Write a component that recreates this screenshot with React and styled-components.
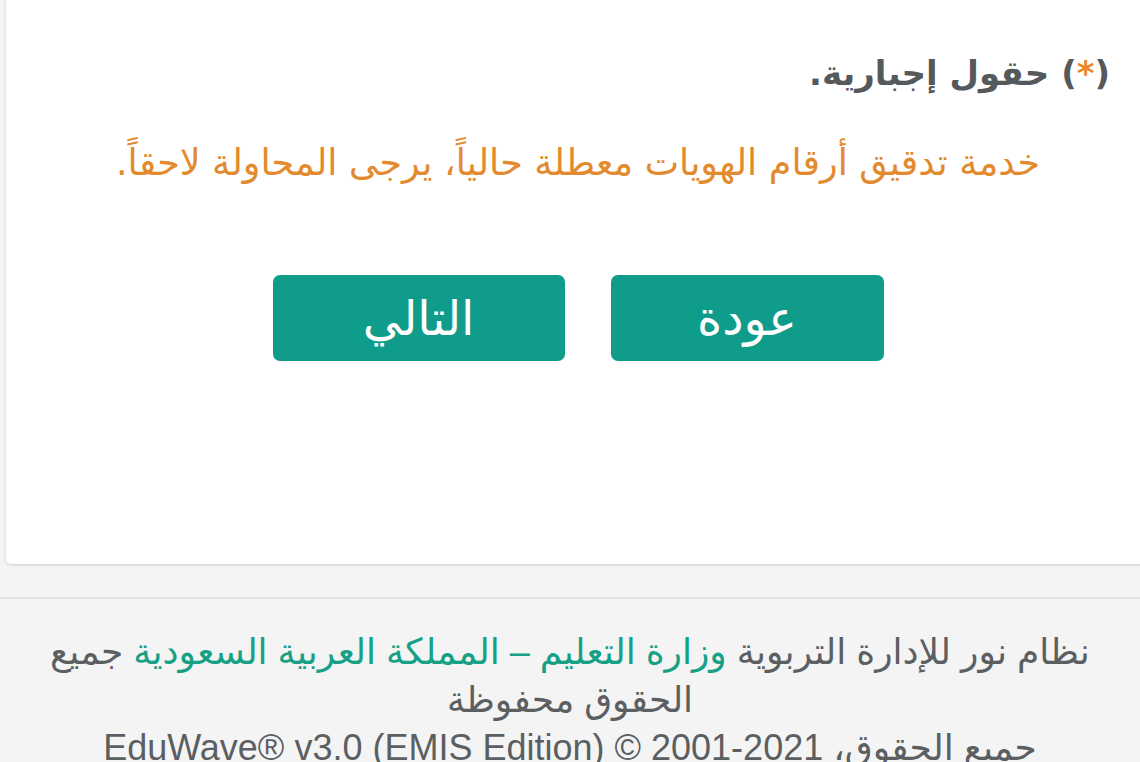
import React from "react";
import styled, { createGlobalStyle } from "styled-components";

const GlobalStyle = createGlobalStyle`
  html, body {
    margin: 0;
    padding: 0;
    background: #f4f4f4;
    overflow: hidden;
  }
  body {
    font-family: "DejaVu Sans", "Liberation Sans", sans-serif;
  }
`;

const Page = styled.div`
  direction: rtl;
  width: 1140px;
  height: 762px;
  overflow: hidden;
`;

const Card = styled.section`
  background: #fff;
  margin: -20px -10px 0 6px;
  padding: 68px 40px 0;
  border-radius: 5px;
  box-shadow: 0 1px 3px rgba(0, 0, 0, 0.18);
  height: 584px;
  box-sizing: border-box;
`;

const Required = styled.p`
  margin: 0;
  text-align: right;
  font-size: 34px;
  font-weight: bold;
  color: #56595c;
  line-height: 50px;
  span {
    color: #e8872a;
  }
`;

const Notice = styled.p`
  margin: 40px 0 0;
  text-align: center;
  font-size: 36.5px;
  color: #e38a2e;
  line-height: 50px;
`;

const Actions = styled.div`
  display: flex;
  justify-content: center;
  gap: 46px;
  margin-top: 87px;
`;

const Button = styled.button`
  height: 86px;
  width: ${(p) => p.$w}px;
  border: none;
  border-radius: 7px;
  background: #0f9c8a;
  color: #fff;
  font-family: "DejaVu Sans", sans-serif;
  font-size: 48px;
  line-height: 86px;
  padding: 0;
  cursor: pointer;
`;

const Footer = styled.footer`
  margin-top: 33px;
  border-top: 2px solid #e0e0e0;
  padding: 29px 24px 0;
  text-align: center;
  font-family: "Liberation Sans", "DejaVu Sans", sans-serif;
  font-size: 36px;
  line-height: 48px;
  color: #5b5f62;
  a {
    color: #16a085;
    text-decoration: none;
  }
`;

export default function App() {
  return (
    <Page>
      <GlobalStyle />
      <Card>
        <Required>
          (<span>*</span>) حقول إجبارية.
        </Required>
        <Notice>خدمة تدقيق أرقام الهويات معطلة حالياً، يرجى المحاولة لاحقاً.</Notice>
        <Actions>
          <Button $w={273}>عودة</Button>
          <Button $w={292}>التالي</Button>
        </Actions>
      </Card>
      <Footer>
        نظام نور للإدارة التربوية <a href="#">وزارة التعليم – المملكة العربية السعودية</a> جميع الحقوق محفوظة
        <br />
        جميع الحقوق، <bdi dir="ltr">EduWave® v3.0 (EMIS Edition) © 2001-2021</bdi>
      </Footer>
    </Page>
  );
}
